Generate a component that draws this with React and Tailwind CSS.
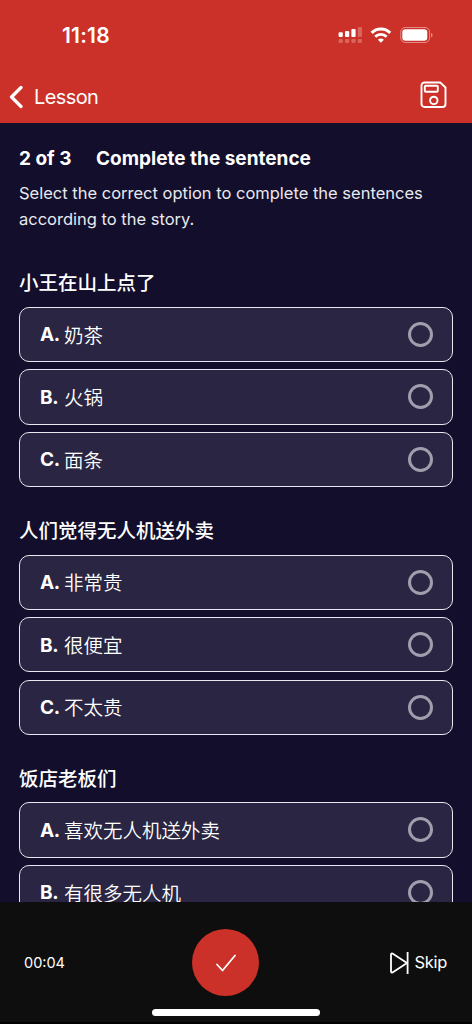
import { useState } from "react";

const questions = [
  {
    title: "小王在山上点了",
    options: ["奶茶", "火锅", "面条"],
  },
  {
    title: "人们觉得无人机送外卖",
    options: ["非常贵", "很便宜", "不太贵"],
  },
  {
    title: "饭店老板们",
    options: ["喜欢无人机送外卖", "有很多无人机"],
  },
];

const letters = ["A", "B", "C"];

function StatusIcons() {
  return (
    <svg width="96" height="18" viewBox="338 26 96 18" fill="none">
      {/* Signal */}
      <g fill="#fff">
        <rect x="338.6" y="32.2" width="4.2" height="4.8" rx="1" />
        <rect x="345" y="31" width="4.2" height="6" rx="1" />
        <rect x="351.4" y="29" width="4.2" height="8" rx="1" />
        <g opacity=".25">
          <rect x="357.8" y="27" width="4.2" height="10" rx="1" />
          <rect x="338.6" y="39" width="4.2" height="4" rx="1.2" />
          <rect x="345" y="39" width="4.2" height="4" rx="1.2" />
          <rect x="351.4" y="39" width="4.2" height="4" rx="1.2" />
          <rect x="357.8" y="39" width="4.2" height="4" rx="1.2" />
        </g>
      </g>
      {/* Wifi */}
      <path d="M371.6 32.9a13.2 13.2 0 0 1 18.6 0" stroke="#fff" strokeWidth="3" />
      <path d="M375.2 36.8a8 8 0 0 1 11.4 0" stroke="#fff" strokeWidth="2.8" />
      <path d="M377.9 39.8a4.4 4.4 0 0 1 6 0l-3 3z" fill="#fff" />
      {/* Battery */}
      <rect x="400.8" y="27.5" width="28.8" height="15" rx="4.6" stroke="#fff" strokeOpacity=".45" />
      <rect x="402.3" y="29.3" width="25" height="11.4" rx="3.2" fill="#fff" />
      <path d="M431 33v4.4c.9-.4 1.6-1.2 1.6-2.2s-.7-1.8-1.6-2.2z" fill="#fff" fillOpacity=".45" />
    </svg>
  );
}

function Option({ letter, text, checked, onSelect }) {
  return (
    <button
      onClick={onSelect}
      className="flex h-[55.4px] w-full shrink-0 items-center justify-between rounded-[10px] border border-[#e9e7ef] bg-[#292542] pr-[19px] pl-5 text-left"
    >
      <span className="flex items-center text-[19.5px] leading-none text-white">
        <span className="w-6 shrink-0 pt-px text-[19px] font-bold tracking-[-0.4px]">{letter}.</span>
        <span className="pt-1 font-[350]">{text}</span>
      </span>
      <span
        className={`size-[25px] shrink-0 rounded-full border-3 border-[#a09dad] ${
          checked ? "bg-[#cb3128]" : ""
        }`}
      />
    </button>
  );
}

export default function App() {
  const [answers, setAnswers] = useState({});

  return (
    <div className="flex h-screen w-full flex-col overflow-hidden bg-[#120e2b] font-[Inter,'Noto_Sans_CJK_SC',sans-serif] text-white">
      <header className="h-[123px] shrink-0 bg-[#cb3128]">
        <div className="flex h-[70px] items-center justify-between pr-[38px] pl-[62px]">
          <span className="pt-0.5 text-[21px] font-semibold tracking-[0.2px]">11:18</span>
          <StatusIcons />
        </div>
        <div className="flex h-[53px] items-center justify-between pr-[25px] pl-[9px]">
          <button className="flex items-center gap-[11px]">
            <svg width="14" height="24" viewBox="0 0 14 24" fill="none" stroke="#fff" strokeWidth="3.2" strokeLinecap="round" strokeLinejoin="round">
              <path d="M12 2.5 2.5 12l9.5 9.5" />
            </svg>
            <span className="text-[20px] tracking-[-0.6px]">Lesson</span>
          </button>
          <button className="-mt-1">
            <svg width="27" height="27" viewBox="0 0 27 27" fill="none" stroke="#fff" strokeWidth="1.9" strokeLinejoin="round">
              <path d="M4.2 1.5H20.2L25.5 6.5V23a3 3 0 0 1-3 3H4.5a3 3 0 0 1-3-3V4.5a3 3 0 0 1 3-3z" />
              <rect x="4.8" y="4.8" width="13" height="6" rx="1" />
              <circle cx="13.8" cy="19.4" r="3.7" />
            </svg>
          </button>
        </div>
      </header>

      <main className="flex-1 overflow-hidden px-[19px] pt-[23px]">
        <h1 className="flex h-[26px] items-center text-[19px] font-bold whitespace-nowrap">
          <span className="w-[77px] shrink-0">2 of 3</span>
          <span>Complete the sentence</span>
        </h1>
        <p className="mt-2 text-[16.5px] leading-[26.3px] text-[#e9e8ee]">
          Select the correct option to complete the sentences
          <br />
          according to the story.
        </p>

        <div className="mt-[37.6px] flex flex-col gap-[30.8px]">
          {questions.map((q, i) => (
            <section key={q.title}>
              <h2 className="flex h-[30px] items-start text-[19.5px] leading-[26px] font-medium">{q.title}</h2>
              <div className="mt-[6.6px] flex flex-col gap-[7.1px]">
                {q.options.map((text, j) => (
                  <Option
                    key={text}
                    letter={letters[j]}
                    text={text}
                    checked={answers[i] === j}
                    onSelect={() => setAnswers({ ...answers, [i]: j })}
                  />
                ))}
              </div>
            </section>
          ))}
        </div>
      </main>

      <footer className="flex h-[122px] shrink-0 flex-col items-center justify-between border-b-2 border-black bg-[#0e0e0e] pt-[27px] pb-[6px]">
        <div className="grid w-full grid-cols-[168px_67px_1fr] items-center pr-[25px] pl-6">
          <span className="text-[14.5px]">00:04</span>
          <button className="flex size-[67px] items-center justify-center rounded-full bg-[#cb3128]">
            <svg width="22" height="20" viewBox="0 0 22 20" fill="none" stroke="#fff" strokeWidth="1.8" strokeLinecap="round" strokeLinejoin="round">
              <path d="M2 11.5l5.5 6L20 2.5" />
            </svg>
          </button>
          <button className="flex items-center justify-end gap-[5px]">
            <svg width="20" height="22" viewBox="0 0 20 22" fill="none" stroke="#fff" strokeWidth="1.8" strokeLinejoin="round">
              <path d="M2 2.5v17c0 1 .8 1.3 1.5.9L18 11 3.5 1.6c-.7-.4-1.5-.1-1.5.9z" />
              <path d="M18.6 0v22" />
            </svg>
            <span className="text-[16.5px] tracking-[-0.3px]">Skip</span>
          </button>
        </div>
        <div className="h-[7px] w-[168px] rounded-full bg-white" />
      </footer>
    </div>
  );
}
